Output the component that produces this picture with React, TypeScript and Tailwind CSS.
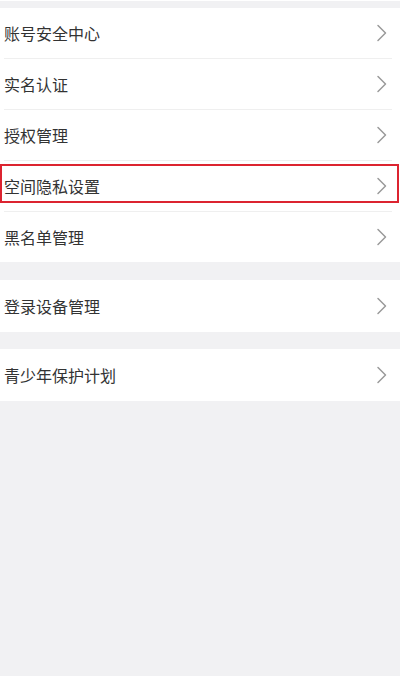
import React from "react";

const Chevron = () => (
  <svg width="12" height="18" viewBox="0 0 12 18" fill="none" className="shrink-0">
    <path d="M2 1.5 L9.5 9 L2 16.5" stroke="#9a9a9a" strokeWidth="1.5" strokeLinecap="round" strokeLinejoin="round" />
  </svg>
);

type RowProps = { label: string; h?: string; highlight?: boolean };

const Row = ({ label, h = "h-[50px]", highlight }: RowProps) => (
  <div className={`relative flex items-center justify-between bg-white pl-[4px] pr-[12px] ${h}`}>
    <span className="text-[16px] leading-none text-[#333333]">{label}</span>
    <Chevron />
    {highlight && (
      <div className="pointer-events-none absolute left-0 right-[1px] top-[3px] h-[39px] border-2 border-[#dc2430]" />
    )}
  </div>
);

const Sep = () => (
  <div className="bg-white pl-[4px] pr-[8px]">
    <div className="h-px bg-[#efefef]" />
  </div>
);

export default function App() {
  return (
    <div
      className="min-h-[676px] w-[400px] bg-[#f1f1f3]"
      style={{ fontFamily: '"Noto Sans CJK SC", "Noto Sans", sans-serif' }}
    >
      <div className="h-px bg-white" />
      <div className="h-[7px]" />
      <div className="flex flex-col">
        <Row label="账号安全中心" />
        <Sep />
        <Row label="实名认证" />
        <Sep />
        <Row label="授权管理" />
        <Sep />
        <Row label="空间隐私设置" highlight />
        <Sep />
        <Row label="黑名单管理" />
      </div>
      <div className="h-[18px]" />
      <Row label="登录设备管理" h="h-[52px]" />
      <div className="h-[17px]" />
      <Row label="青少年保护计划" h="h-[52px]" />
    </div>
  );
}
